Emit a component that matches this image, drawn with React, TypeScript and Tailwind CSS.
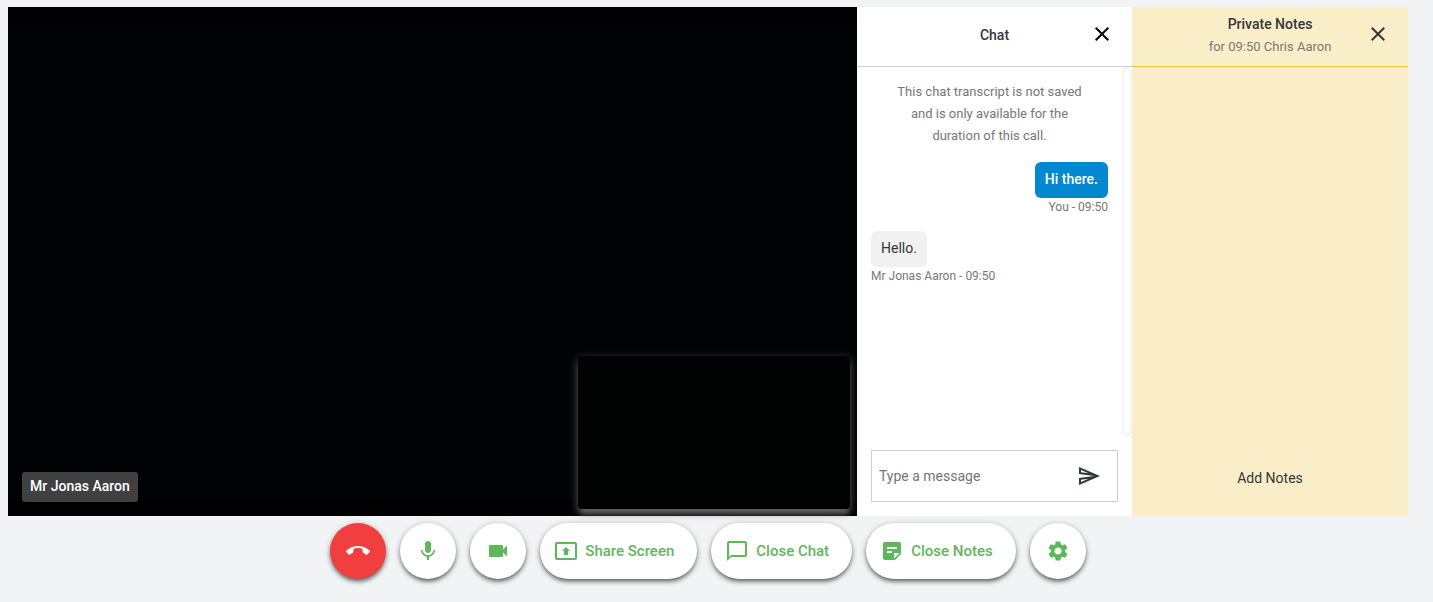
import type { ReactNode } from "react";
import clsx from "clsx";
import {
  MdCallEnd,
  MdChatBubbleOutline,
  MdClose,
  MdMic,
  MdOutlineSend,
  MdPresentToAll,
  MdSettings,
  MdStickyNote2,
  MdVideocam,
} from "react-icons/md";

type Message = {
  id: number;
  sender: string;
  time: string;
  text: string;
  own?: boolean;
};

const messages: Message[] = [
  { id: 1, sender: "You", time: "09:50", text: "Hi there.", own: true },
  { id: 2, sender: "Mr Jonas Aaron", time: "09:50", text: "Hello." },
];

const VideoPanel = () => {
  return (
    <section className="relative min-w-0 flex-1 bg-black py-4">
      <div className="h-full bg-[#010203]" />

      {/* Participant name */}
      <div className="absolute bottom-[14px] left-[14px] rounded-[3px] bg-[#404040] px-2 pt-[3px] pb-[5px] text-sm leading-[22px] font-medium text-white">
        Mr Jonas Aaron
      </div>

      {/* Self view */}
      <div className="absolute right-[7px] bottom-[7px] h-[153px] w-[272px] rounded-[4px] bg-[#010202] shadow-[0_7px_5px_-2px_rgba(130,125,130,0.55),0_3px_8px_1px_rgba(130,125,130,0.55)]" />
    </section>
  );
};

const ChatMessage = ({ message }: { message: Message }) => {
  return (
    <li className={clsx("flex flex-col", message.own ? "items-end" : "items-start")}>
      <p
        className={clsx(
          "rounded-[6px] px-[10px] pt-[7px] pb-[9px] text-sm leading-5",
          message.own ? "bg-[#0288d1] font-medium text-white" : "bg-[#f1f1f1] text-[#32373c]"
        )}
      >
        {message.text}
      </p>
      <span className="text-xs leading-[18px] text-[#74787c]">
        {message.sender} - {message.time}
      </span>
    </li>
  );
};

const ChatPanel = () => {
  return (
    <section className="flex w-[275px] shrink-0 flex-col bg-white">
      <header className="relative flex h-[60px] items-center justify-center border-b border-[#cfcfcf] pb-[3px]">
        <h2 className="text-sm font-medium text-[#32373c]">Chat</h2>
        <button type="button" aria-label="Close chat" className="absolute top-[15px] right-[18px] text-black">
          <MdClose size={24} />
        </button>
      </header>

      <div className="flex min-h-0 flex-1">
        <div className="min-w-0 flex-1 pt-[14px] pr-[14px] pl-[14px]">
          <p className="px-4 text-center text-[13px] leading-[22px] text-[#74787c]">
            This chat transcript is not saved and is only available for the duration of this call.
          </p>
          <ul className="mt-[15px] flex flex-col gap-[15px]">
            {messages.map((message) => (
              <ChatMessage key={message.id} message={message} />
            ))}
          </ul>
        </div>
        <div className="w-[10px] rounded-[5px] shadow-[inset_0_0_5px_rgba(0,0,0,0.1)]" />
      </div>

      {/* Input */}
      <form
        onSubmit={(e) => e.preventDefault()}
        className="mx-[14px] mt-[14px] mb-[14px] flex h-[52px] items-center border border-[#cfcfcf] pr-4 pl-[7px]"
      >
        <input
          type="text"
          aria-label="Type a message"
          placeholder="Type a message"
          className="min-w-0 flex-1 text-sm outline-none placeholder:text-[#757575]"
        />
        <button type="submit" aria-label="Send" className="text-[#32373c]">
          <MdOutlineSend size={24} />
        </button>
      </form>
    </section>
  );
};

const NotesPanel = () => {
  return (
    <section className="flex w-[276px] shrink-0 flex-col bg-[#faeec8]">
      <header className="relative h-[60px] border-b border-[#f0c63c] pt-[6px] text-center">
        <h2 className="text-sm leading-[22px] font-medium text-[#32373c]">Private Notes</h2>
        <p className="text-[13px] leading-6 text-[#7b7b70]">for 09:50 Chris Aaron</p>
        <button type="button" aria-label="Close notes" className="absolute top-[15px] right-[18px] text-[#32373c]">
          <MdClose size={24} />
        </button>
      </header>
      <div className="flex-1" />
      <button type="button" className="mx-[14px] mb-[14px] h-12 text-sm text-[#32373c]">
        Add Notes
      </button>
    </section>
  );
};

type ControlProps = {
  icon: ReactNode;
  label: string;
  text?: string;
  danger?: boolean;
};

const ControlButton = ({ icon, label, text, danger }: ControlProps) => {
  return (
    <button
      type="button"
      aria-label={label}
      className={clsx(
        "flex h-14 min-w-14 items-center justify-center gap-[7px] rounded-full text-[15px] font-medium shadow-[0_3px_5px_-1px_rgba(0,0,0,0.6),0_1px_6px_rgba(0,0,0,0.2)]",
        danger ? "bg-[#f13e3f] text-white" : "bg-white text-[#5fb75b]",
        text && "pr-[23px] pl-[14px]"
      )}
    >
      {icon}
      {text}
    </button>
  );
};

export default function App() {
  return (
    <div className="flex h-screen flex-col bg-[#f1f3f5] pt-[7px] pb-[23px] font-[Roboto,sans-serif]">
      <main className="mr-[25px] ml-2 flex min-h-0 flex-1">
        <VideoPanel />
        <ChatPanel />
        <NotesPanel />
      </main>

      {/* Call controls */}
      <footer className="mr-[25px] ml-2 flex justify-center gap-[14px] pt-[7px]">
        <ControlButton danger label="End call" icon={<MdCallEnd size={24} />} />
        <ControlButton label="Microphone" icon={<MdMic size={24} />} />
        <ControlButton label="Camera" icon={<MdVideocam size={24} />} />
        <ControlButton label="Share Screen" text="Share Screen" icon={<MdPresentToAll size={24} />} />
        <ControlButton label="Close Chat" text="Close Chat" icon={<MdChatBubbleOutline size={24} />} />
        <ControlButton label="Close Notes" text="Close Notes" icon={<MdStickyNote2 size={24} />} />
        <ControlButton label="Settings" icon={<MdSettings size={24} />} />
      </footer>
    </div>
  );
}
